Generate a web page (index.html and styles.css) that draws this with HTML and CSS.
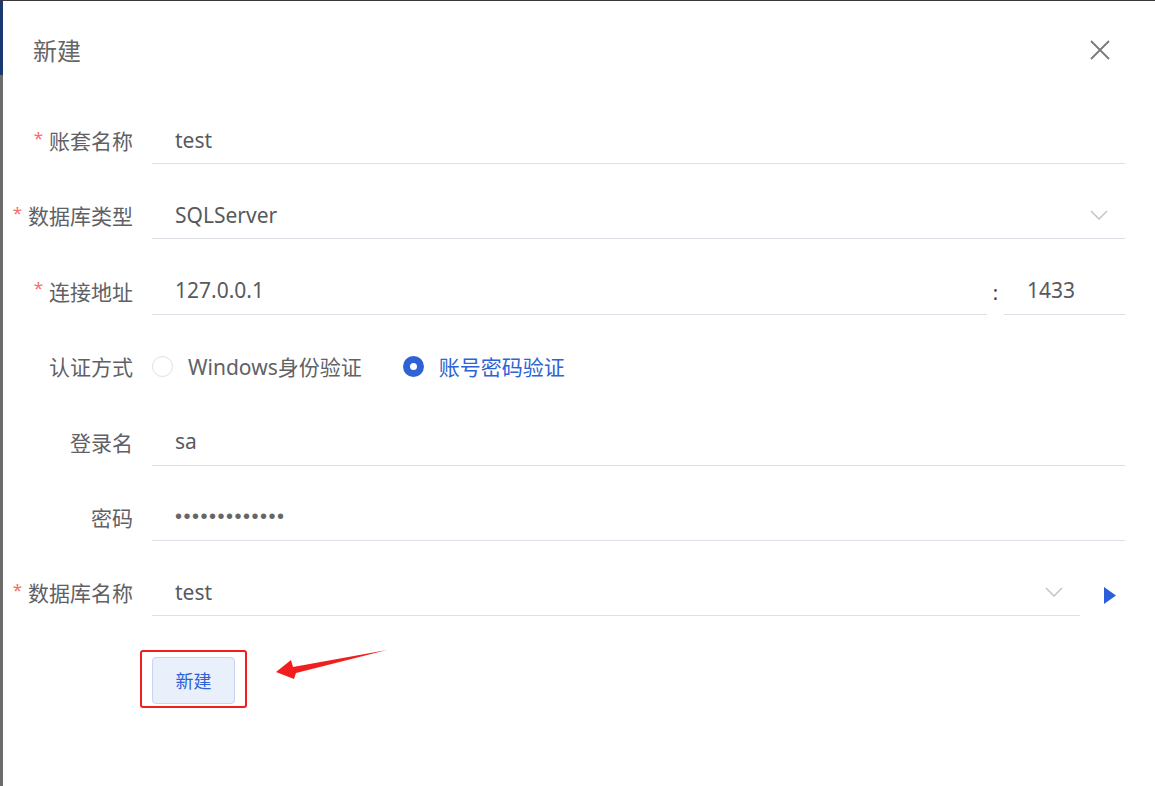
FILE: index.html
```html
<!DOCTYPE html>
<html lang="zh-CN">
<head>
<meta charset="utf-8">
<title>新建</title>
<link rel="stylesheet" href="styles.css">
</head>
<body>
<div class="frame">
  <div class="side"></div>
  <div class="dialog">
    <div class="header">
      <span class="title">新建</span>
      <svg class="close" width="20" height="20" viewBox="0 0 20 20"><path d="M1 1L19 19M19 1L1 19" stroke="#7a7a7a" stroke-width="1.8" fill="none"/></svg>
    </div>
    <div class="form">
      <label class="label"><span class="req">*</span>账套名称</label>
      <div class="control"><div class="input">test</div></div>

      <label class="label"><span class="req">*</span>数据库类型</label>
      <div class="control"><div class="input select">SQLServer<svg class="chev" width="18" height="10" viewBox="0 0 18 10"><path d="M1 1L9 9L17 1" stroke="#c0c4cc" stroke-width="1.5" fill="none"/></svg></div></div>

      <label class="label"><span class="req">*</span>连接地址</label>
      <div class="control split">
        <div class="input grow">127.0.0.1</div>
        <span class="colon">:</span>
        <div class="input port">1433</div>
      </div>

      <label class="label">认证方式</label>
      <div class="control radios">
        <span class="radio"><span class="dot"></span>Windows身份验证</span>
        <span class="radio checked"><span class="dot"></span>账号密码验证</span>
      </div>

      <label class="label">登录名</label>
      <div class="control"><div class="input">sa</div></div>

      <label class="label">密码</label>
      <div class="control"><div class="input"><span class="pwd">•••••••••••••</span></div></div>

      <label class="label"><span class="req">*</span>数据库名称</label>
      <div class="control split">
        <div class="input select grow">test<svg class="chev" width="18" height="10" viewBox="0 0 18 10"><path d="M1 1L9 9L17 1" stroke="#c0c4cc" stroke-width="1.5" fill="none"/></svg></div>
        <span class="play"><svg width="12" height="17" viewBox="0 0 12 17"><path d="M0 0L12 8.5L0 17Z" fill="#2b5fd9"/></svg></span>
      </div>

      <div class="actions">
        <button class="btn">新建</button>
        <span class="highlight"></span>
        <svg class="arrow" width="130" height="40" viewBox="0 0 130 40"><polygon points="6,27 21,15 23,22 117,5 26,28 24,34" fill="#f21d1d"/></svg>
      </div>
    </div>
  </div>
</div>
</body>
</html>
```
FILE: styles.css
```css
* { box-sizing: border-box; }
html, body { margin: 0; padding: 0; background: #fff; }
body {
  font-family: "Noto Sans", "Noto Sans CJK SC", sans-serif;
  color: #606266;
  width: 1155px;
  height: 786px;
  overflow: hidden;
}
.frame {
  display: flex;
  height: 786px;
  border-top: 1px solid #3a3a3a;
}
.side {
  width: 3px;
  flex: none;
  background: linear-gradient(#1b3970 0, #1b3970 74px, #6b6b6b 74px);
}
.dialog {
  flex: 1;
  background: #fff;
  padding-right: 30px;
}
.header {
  height: 98px;
  display: flex;
  align-items: center;
  justify-content: space-between;
  padding-left: 30px;
}
.title {
  font-size: 24px;
  line-height: 30px;
  color: #666;
  font-family: "Noto Sans CJK SC", sans-serif;
}
.close { margin-right: 15px; }
.form {
  padding-top: 17px;
  display: grid;
  grid-template-columns: 149px 1fr;
  row-gap: 27.4px;
}
.label {
  height: 48px;
  display: flex;
  align-items: center;
  justify-content: flex-end;
  padding-right: 19px;
  font-size: 21px;
  font-family: "Noto Sans CJK SC", sans-serif;
  color: #5f6166;
}
.req {
  color: #f56c6c;
  font-size: 17px;
  margin-right: 6px;
  position: relative;
  top: -3px;
  font-family: "Noto Sans", sans-serif;
}
.control {
  height: 48px;
  display: flex;
  align-items: center;
}
.input {
  flex: 1;
  height: 48px;
  display: flex;
  align-items: center;
  padding-left: 23px;
  border-bottom: 1px solid #dcdfe6;
  font-size: 21px;
  color: #58595d;
}
.select { justify-content: space-between; padding-right: 17px; }
.split .grow { flex: 1; }
.colon {
  width: 17px;
  text-align: center;
  font-size: 20px;
  color: #444;
  padding-top: 4px;
}
.port { flex: none; width: 121px; }
.pwd {
  font-family: "Liberation Sans", sans-serif;
  font-size: 20px;
  letter-spacing: 1.5px;
  color: #666;
}
.play {
  width: 45px;
  flex: none;
  display: flex;
  justify-content: flex-start;
  padding-left: 24px;
  padding-top: 6px;
}
.radios { font-size: 21px; }
.radio {
  display: inline-flex;
  align-items: center;
  color: #606266;
}
.radio .dot {
  width: 21px;
  height: 21px;
  border-radius: 50%;
  border: 1px solid #dcdfe6;
  margin-right: 15px;
  background: #fff;
}
.radio.checked { margin-left: 41px; color: #2d63d4; }
.radio.checked .dot {
  border: 7px solid #2d63d4;
  background: #fff;
}
.actions {
  grid-column: 2;
  margin-top: 13px;
  position: relative;
  height: 47px;
}
.btn {
  width: 83px;
  height: 47px;
  border: 1px solid #c7d5f1;
  border-radius: 4px;
  background: #e9effb;
  color: #2f63d5;
  font-size: 18px;
  font-family: "Noto Sans CJK SC", sans-serif;
  padding: 0;
}
.highlight {
  position: absolute;
  left: -12px;
  top: -7px;
  width: 107px;
  height: 58px;
  border: 2px solid #f21d1d;
  border-radius: 3px;
}
.arrow {
  position: absolute;
  left: 118px;
  top: -12px;
}
```
